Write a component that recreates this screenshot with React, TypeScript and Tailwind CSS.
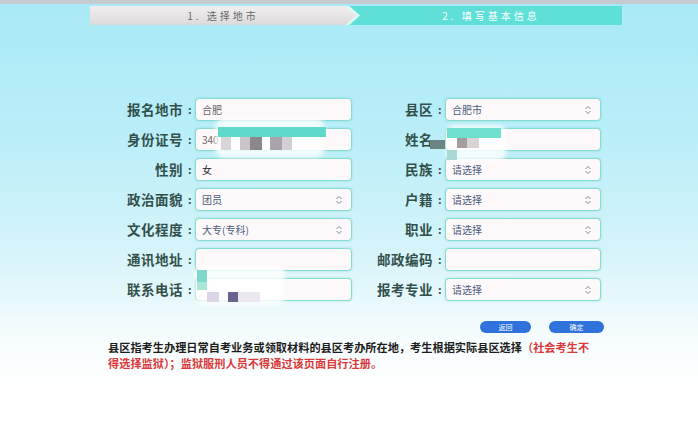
import React from "react";

type Field = { label: string; colon?: boolean; value?: string; select?: boolean; dark?: boolean };

const LEFT: Field[] = [
  { label: "报名地市", colon: true, value: "合肥" },
  { label: "身份证号", colon: true, value: "340" },
  { label: "性别", colon: true, value: "女", dark: true },
  { label: "政治面貌", colon: true, value: "团员", select: true },
  { label: "文化程度", colon: true, value: "大专(专科)", select: true },
  { label: "通讯地址", colon: true },
  { label: "联系电话", colon: true },
];

const RIGHT: Field[] = [
  { label: "县区", colon: true, value: "合肥市", select: true },
  { label: "姓名" },
  { label: "民族", colon: true, value: "请选择", select: true },
  { label: "户籍", colon: true, value: "请选择", select: true },
  { label: "职业", colon: true, value: "请选择", select: true },
  { label: "邮政编码", colon: true },
  { label: "报考专业", colon: true, value: "请选择", select: true },
];

function UpDown() {
  return (
    <svg width="8" height="10" viewBox="0 0 8 10" className="shrink-0">
      <path d="M1.5 4 L4 1.5 L6.5 4" fill="none" stroke="#7a8a9a" strokeWidth="1" />
      <path d="M1.5 6 L4 8.5 L6.5 6" fill="none" stroke="#7a8a9a" strokeWidth="1" />
    </svg>
  );
}

function Input({ f, w }: { f: Field; w: string }) {
  return (
    <div
      className={`${w} h-[23px] rounded-[4px] border-[1.5px] border-[#86dccf] bg-[#fdf8fa] flex items-center pl-[6px] pr-[8px] shadow-[0_0_2px_rgba(90,200,190,0.5)]`}
    >
      <span
        className={`flex-1 text-[10px] ${f.dark ? "text-[#222]" : f.select ? "text-[#4c5c7c]" : "text-[#666]"}`}
      >
        {f.value}
      </span>
      {f.select && <UpDown />}
    </div>
  );
}

function Label({ f, w }: { f: Field; w: string }) {
  return (
    <div className={`${w} flex items-center justify-end pr-[4px] text-[#32504b] font-bold leading-none`}>
      <span className="text-[13.5px] tracking-[0.5px]">{f.label}</span>
      <span className={`text-[11px] ml-[5px] w-[3px] ${f.colon ? "" : "invisible"}`}>:</span>
    </div>
  );
}

export default function App() {
  return (
    <div
      className="relative w-[698px] h-[422px] overflow-hidden bg-[linear-gradient(180deg,#a9e9f6_0%,#b8eef8_30%,#d6f4fa_60%,#f6fcfd_80%,#ffffff_92%)]"
      style={{ fontFamily: '"Noto Sans CJK SC", "Noto Sans", sans-serif' }}
    >
      <div className="h-[4px] bg-[#c6cbcf]" />

      {/* steps */}
      <div className="ml-[90px] mt-[2px] w-[532px] h-[19px] relative bg-[#5ee0d8]">
        <div className="absolute inset-y-0 left-0 w-[270px] bg-white/80 [clip-path:polygon(0_0,96%_0,100%_50%,96%_100%,0_100%)]" />
        <div className="absolute inset-y-0 left-0 w-[266px] bg-[linear-gradient(180deg,#f0eeef,#dcdadb)] [clip-path:polygon(0_0,96%_0,100%_50%,96%_100%,0_100%)] flex items-center justify-center">
          <span className="text-[10px] tracking-[3px] text-[#6a6a6a]">1. 选择地市</span>
        </div>
        <div className="absolute inset-y-0 left-[270px] right-0 flex items-center justify-center">
          <span className="text-[10px] tracking-[3px] text-white">2. 填写基本信息</span>
        </div>
      </div>

      {/* form */}
      <div className="mt-[73px] ml-[100px] flex flex-col gap-[7px]">
        {LEFT.map((l, i) => {
          const r = RIGHT[i];
          return (
            <div key={i} className="flex items-center">
              <Label f={l} w="w-[95px]" />
              <Input f={l} w="w-[157px]" />
              <Label f={r} w="w-[93px]" />
              <Input f={r} w="w-[156px]" />
            </div>
          );
        })}
      </div>

      {/* mosaics over personal data */}
      <div className="absolute left-[215px] top-[118px] w-[110px] h-[40px] bg-white/80 rounded-[10px] blur-[2px]" />
      <div className="absolute left-[218px] top-[127px] w-[108px] h-[10px] bg-[#5fd9c9]" />
      <div className="absolute left-[221px] top-[137px] flex">
        <div className="w-[10px] h-[13px] bg-[#d9d6da]" />
        <div className="w-[9px] h-[13px]" />
        <div className="w-[10px] h-[13px] bg-[#c9c6ca]" />
        <div className="w-[12px] h-[13px] bg-[#8c878e]" />
        <div className="w-[8px] h-[13px]" />
        <div className="w-[12px] h-[13px] bg-[#a9a4ab]" />
        <div className="w-[10px] h-[13px] bg-[#d3cfd4]" />
      </div>

      <div className="absolute left-[446px] top-[125px] w-[60px] h-[36px] bg-white/80 rounded-[8px] blur-[2px]" />
      <div className="absolute left-[447px] top-[128px] w-[54px] h-[10px] bg-[#6fdfd0]" />
      <div className="absolute left-[430px] top-[140px] w-[15px] h-[9px] bg-[#6b8584]" />
      <div className="absolute left-[457px] top-[138px] flex">
        <div className="w-[10px] h-[10px] bg-[#a39d9e]" />
        <div className="w-[12px] h-[10px] bg-[#d8d4d5]" />
      </div>
      <div className="absolute left-[447px] top-[150px] w-[10px] h-[10px] bg-[#a8d9d2]" />

      <div className="absolute left-[195px] top-[265px] w-[90px] h-[40px] bg-white/80 rounded-[8px] blur-[2px]" />
      <div className="absolute left-[197px] top-[270px] flex flex-col">
        <div className="w-[10px] h-[12px] bg-[#7ed8c9]" />
        <div className="w-[10px] h-[8px] bg-[#a9e6da]" />
      </div>
      <div className="absolute left-[207px] top-[292px] flex">
        <div className="w-[12px] h-[10px] bg-[#dcd6e6]" />
        <div className="w-[9px] h-[10px]" />
        <div className="w-[10px] h-[10px] bg-[#6a6291]" />
        <div className="w-[22px] h-[10px] bg-[#ece8f2]" />
      </div>

      {/* buttons */}
      <div className="mt-[20px] ml-[480px] flex gap-[18px]">
        <div className="w-[51px] h-[12px] rounded-full bg-[#2f72dc] flex items-center justify-center text-[7px] text-white">返回</div>
        <div className="w-[55px] h-[12px] rounded-full bg-[#2f72dc] flex items-center justify-center text-[7px] text-white">确定</div>
      </div>

      {/* notice */}
      <p className="mt-[6px] ml-[108px] w-[490px] text-[11.2px] leading-[16px] font-bold text-[#1c1c1c]">
        县区指考生办理日常自考业务或领取材料的县区考办所在地，考生根据实际县区选择<span className="text-[#d9393a]">（社会考生不得选择监狱）；监狱服刑人员不得通过该页面自行注册。</span>
      </p>
    </div>
  );
}
